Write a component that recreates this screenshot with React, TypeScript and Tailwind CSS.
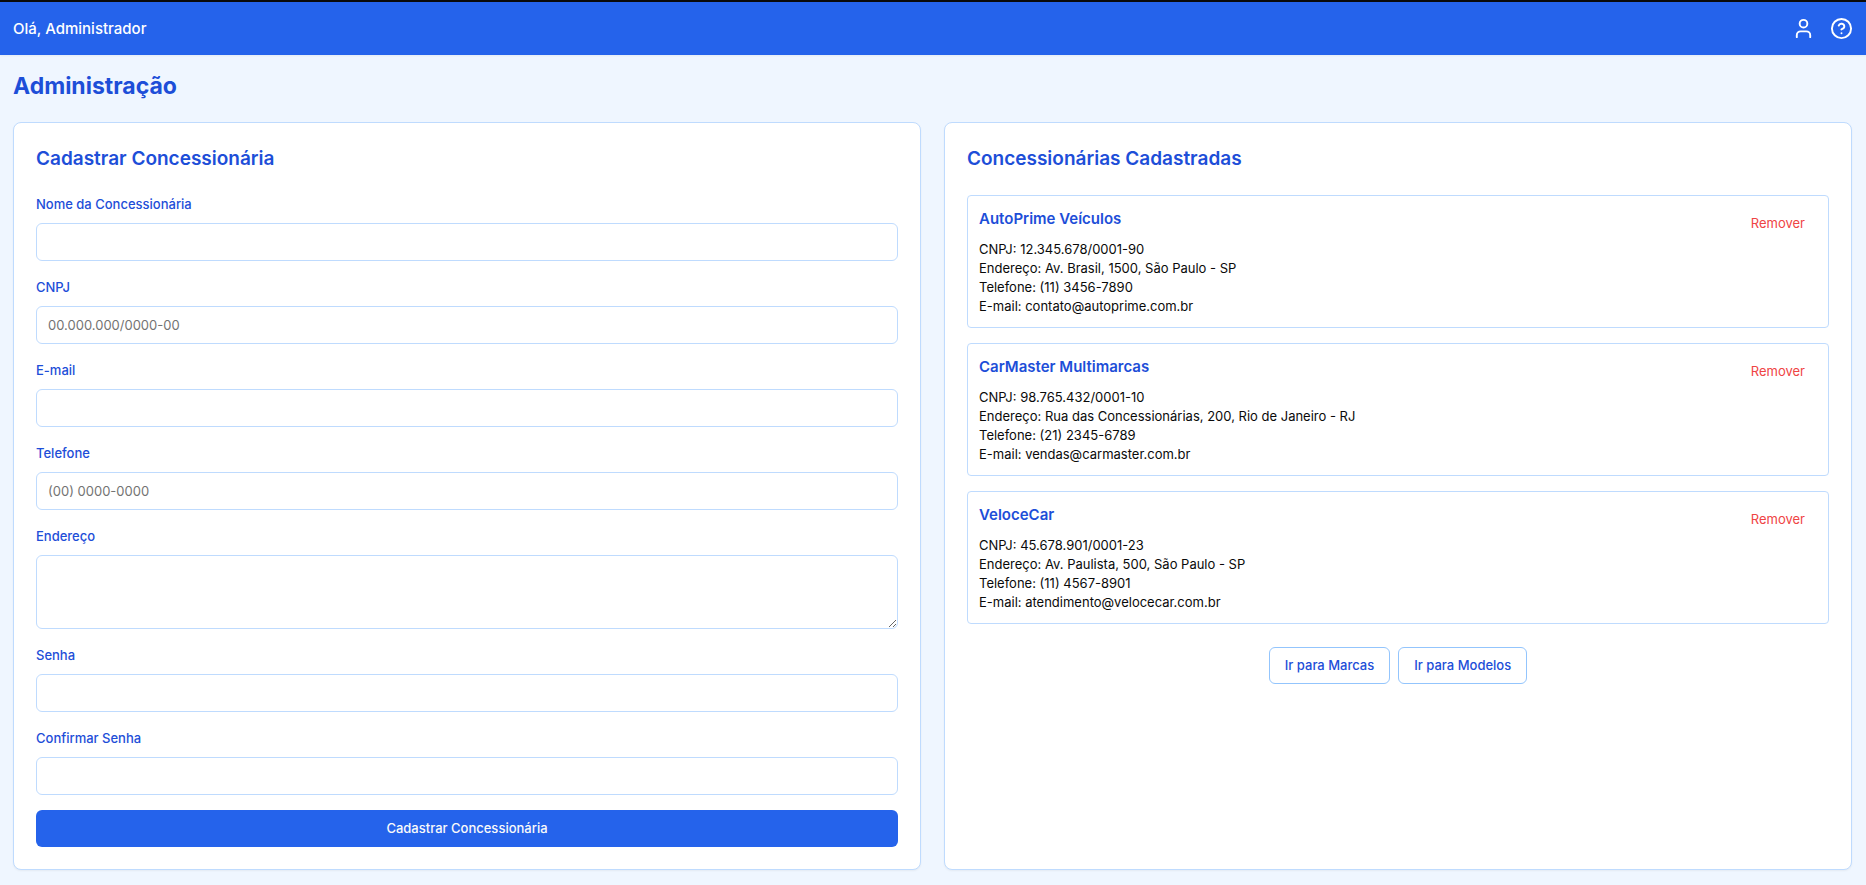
import { CircleHelp, User } from "lucide-react";

type Field = {
  id: string;
  label: string;
  type?: string;
  placeholder?: string;
  multiline?: boolean;
};

const fields: Field[] = [
  { id: "nome", label: "Nome da Concessionária" },
  { id: "cnpj", label: "CNPJ", placeholder: "00.000.000/0000-00" },
  { id: "email", label: "E-mail", type: "email" },
  { id: "telefone", label: "Telefone", placeholder: "(00) 0000-0000" },
  { id: "endereco", label: "Endereço", multiline: true },
  { id: "senha", label: "Senha", type: "password" },
  { id: "confirmar", label: "Confirmar Senha", type: "password" },
];

const dealers = [
  {
    name: "AutoPrime Veículos",
    cnpj: "12.345.678/0001-90",
    address: "Av. Brasil, 1500, São Paulo - SP",
    phone: "(11) 3456-7890",
    email: "contato@autoprime.com.br",
  },
  {
    name: "CarMaster Multimarcas",
    cnpj: "98.765.432/0001-10",
    address: "Rua das Concessionárias, 200, Rio de Janeiro - RJ",
    phone: "(21) 2345-6789",
    email: "vendas@carmaster.com.br",
  },
  {
    name: "VeloceCar",
    cnpj: "45.678.901/0001-23",
    address: "Av. Paulista, 500, São Paulo - SP",
    phone: "(11) 4567-8901",
    email: "atendimento@velocecar.com.br",
  },
];

const card = "rounded-lg border border-[#bfdbfe] bg-white p-[22px] shadow-xs";
const heading = "text-[19px] leading-[28px] font-semibold text-[#1d4ed8]";
const control =
  "block w-full rounded-md border border-[#bfdbfe] bg-white px-[11px] text-[13px] text-[#0a0a0a] placeholder:text-[#737373]";
const outline =
  "h-[37px] rounded-md border border-[#93c5fd] bg-white px-[15px] text-[13px] font-medium text-[#1d4ed8]";

function FormField({ field }: { field: Field }) {
  return (
    <div>
      <label htmlFor={field.id} className="mb-[7px] block text-[13px] leading-[23px] font-medium text-[#1d4ed8]">
        {field.label}
      </label>
      {field.multiline ? (
        <textarea id={field.id} className={`${control} h-[74px] resize-y py-2`} />
      ) : (
        <input
          id={field.id}
          type={field.type ?? "text"}
          placeholder={field.placeholder}
          className={`${control} h-[38px]`}
        />
      )}
    </div>
  );
}

export default function App() {
  return (
    <div className="min-h-screen bg-[#eff6ff] font-['Inter',sans-serif] text-[#0a0a0a]">
      <header className="flex h-[55px] items-center justify-between border-t-2 border-[#0a0a0a] bg-[#2563eb] px-[13px] text-white shadow-xs">
        <span className="text-[15px] leading-[22px] font-medium">Olá, Administrador</span>
        <nav className="flex items-center gap-[15px]">
          <button type="button" aria-label="Perfil">
            <User size={23} />
          </button>
          <button type="button" aria-label="Ajuda">
            <CircleHelp size={23} />
          </button>
        </nav>
      </header>

      <main className="pt-[16px] pr-[14px] pb-[15px] pl-[13px]">
        <h1 className="mb-[21px] text-[23px] leading-[30px] font-bold text-[#1d4ed8]">Administração</h1>

        <div className="grid grid-cols-1 gap-[23px] lg:grid-cols-2">
          <section className={card}>
            <h2 className={heading}>Cadastrar Concessionária</h2>
            <form className="mt-[20px] flex flex-col gap-[15px]" onSubmit={(e) => e.preventDefault()}>
              {fields.map((field) => (
                <FormField key={field.id} field={field} />
              ))}
              <button
                type="submit"
                className="h-[37px] w-full rounded-md bg-[#2563eb] text-[13px] font-medium text-[#fafafa]"
              >
                Cadastrar Concessionária
              </button>
            </form>
          </section>

          <section className={card}>
            <h2 className={heading}>Concessionárias Cadastradas</h2>
            <ul className="mt-[22px] flex flex-col gap-[15px]">
              {dealers.map((dealer) => (
                <li
                  key={dealer.cnpj}
                  className="flex items-start justify-between rounded border border-[#bfdbfe] p-[11px]"
                >
                  <div>
                    <h3 className="mb-[9px] text-[15px] leading-[24px] font-semibold text-[#1d4ed8]">
                      {dealer.name}
                    </h3>
                    <div className="text-[13px] leading-[19px]">
                      <p>CNPJ: {dealer.cnpj}</p>
                      <p>Endereço: {dealer.address}</p>
                      <p>Telefone: {dealer.phone}</p>
                      <p>E-mail: {dealer.email}</p>
                    </div>
                  </div>
                  <button type="button" className="h-[34px] px-3 text-[13px] text-[#ef4444]">
                    Remover
                  </button>
                </li>
              ))}
            </ul>
            <div className="mt-[23px] flex justify-center gap-2">
              <button type="button" className={outline}>
                Ir para Marcas
              </button>
              <button type="button" className={outline}>
                Ir para Modelos
              </button>
            </div>
          </section>
        </div>
      </main>
    </div>
  );
}
